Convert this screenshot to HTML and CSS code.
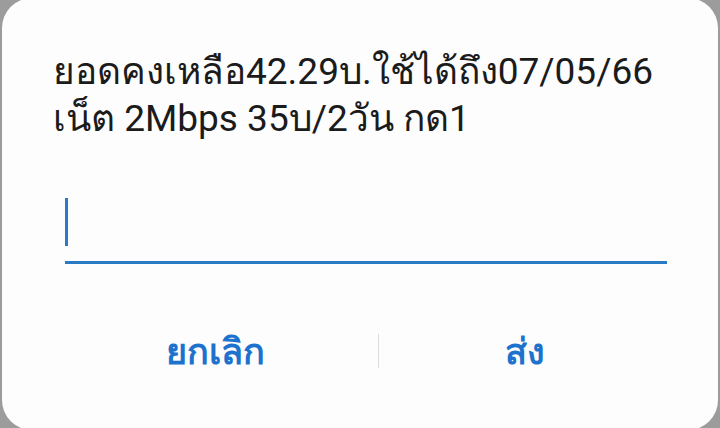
FILE: index.html
```html
<!DOCTYPE html>
<html lang="th">
<head>
    <meta charset="UTF-8">
    <meta name="viewport" content="width=device-width, initial-scale=1.0">
    <title>USSD</title>
    <link rel="stylesheet" href="styles.css">
</head>
<body>
    <div class="dialog">
        <p class="message">ยอดคงเหลือ42.29บ.ใช้ได้ถึง07/05/66<br>เน็ต 2Mbps 35บ/2วัน กด1</p>
        <div class="field">
            <span class="cursor"></span>
        </div>
        <div class="actions">
            <button class="action">ยกเลิก</button>
            <span class="divider"></span>
            <button class="action">ส่ง</button>
        </div>
    </div>
</body>
</html>
```

FILE: styles.css
```css
body {
    margin: 0;
    background: #9c9c9c;
    font-family: Roboto, "Noto Sans", "DejaVu Sans", sans-serif;
    overflow: hidden;
}
.dialog {
    margin: -2px 2px 0 2px;
    height: 432px;
    box-sizing: border-box;
    padding: 50px 50px 0 51px;
    background: #fdfdfd;
    border-radius: 30px;
}
.message {
    margin: 0;
    font-size: 37px;
    line-height: 47px;
    color: #1b1b1b;
}
.field {
    margin: 56px 0 0 12px;
    width: 602px;
    height: 63px;
    border-bottom: 3px solid #2a7bc6;
}
.cursor {
    display: block;
    width: 3px;
    height: 48px;
    background: #2a7bc6;
}
.actions {
    margin-top: 57px;
    height: 60px;
    display: grid;
    grid-template-columns: 325px 1px 1fr;
    align-items: center;
    width: 618px;
}
.action {
    border: 0;
    background: none;
    padding: 0;
    font-family: inherit;
    font-size: 36px;
    font-weight: bold;
    color: #1c72cc;
}
.divider {
    height: 34px;
    background: #dcdcdc;
}
```
